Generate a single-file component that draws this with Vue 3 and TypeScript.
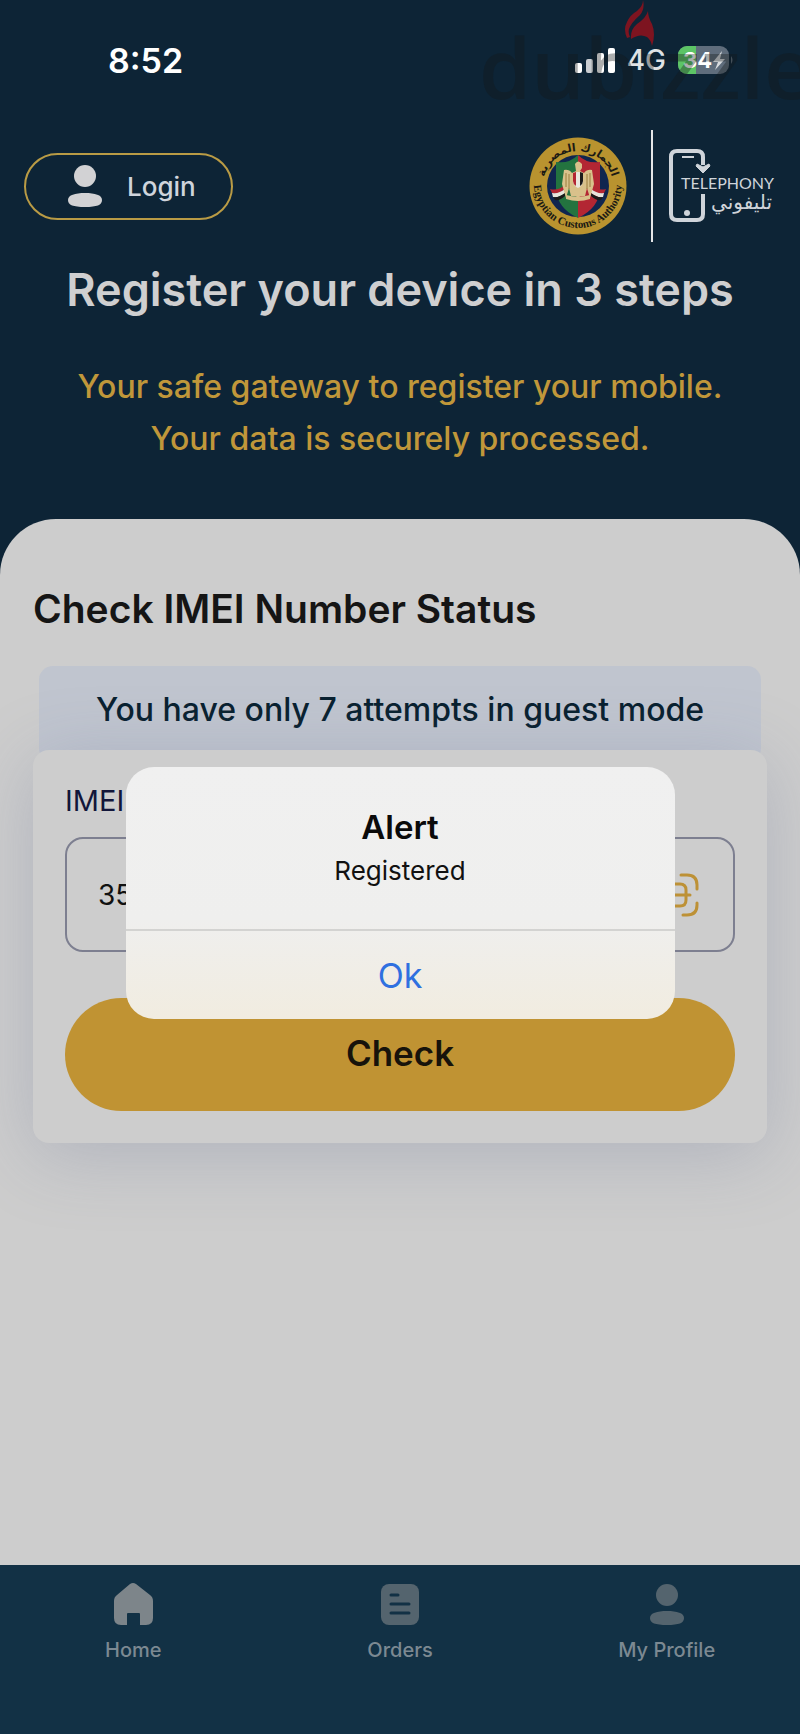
<script setup lang="ts">
import { ref } from 'vue'

interface Tab {
  id: string
  label: string
  icon: 'home' | 'orders' | 'profile'
}

const tabs: Tab[] = [
  { id: 'home', label: 'Home', icon: 'home' },
  { id: 'orders', label: 'Orders', icon: 'orders' },
  { id: 'profile', label: 'My Profile', icon: 'profile' },
]

const activeTab = ref('home')
const imei = ref('35')
const attempts = ref(7)
const alertOpen = ref(true)
</script>

<template>
  <div class="app">
    <header class="hero">
      <div class="status">
        <span class="time">8:52</span>
        <div class="indicators">
          <svg class="signal" viewBox="0 0 40 26" aria-hidden="true">
            <rect x="0" y="16" width="7" height="10" rx="2" fill="#fff" />
            <rect x="11" y="12" width="7" height="14" rx="2" fill="#c9cdd1" />
            <rect x="22" y="6" width="7" height="20" rx="2" fill="#fff" />
            <rect x="33" y="1" width="7" height="25" rx="2" fill="#fff" />
          </svg>
          <span class="network">4G</span>
          <svg class="battery" viewBox="0 0 56 28" aria-label="Battery 34 percent">
            <defs>
              <clipPath id="cell"><rect width="51" height="28" rx="9" /></clipPath>
            </defs>
            <g clip-path="url(#cell)">
              <rect width="51" height="28" fill="#5f6d7c" />
              <rect width="18" height="28" fill="#5cc466" />
            </g>
            <path d="M53 10q3 4 0 8z" fill="#5f6d7c" />
            <text x="5" y="22" class="battery-text">34</text>
            <path d="M44 5 35 16h5l-3 8 10-11h-5z" fill="#d8dcdf" />
          </svg>
        </div>
      </div>

      <div class="brand-row">
        <button class="login" type="button">
          <svg class="person" viewBox="0 0 34 42" aria-hidden="true">
            <circle cx="17" cy="11" r="11" />
            <path d="M17 28c10 0 17 2 17 7s-5 7-17 7S0 40 0 35s7-7 17-7z" />
          </svg>
          <span>Login</span>
        </button>

        <div class="logos">
          <svg class="emblem" viewBox="0 0 98 98" role="img" aria-label="Egyptian Customs Authority">
            <defs>
              <path id="arc-low" d="M5 47a44 44 0 0 0 88 0" />
              <path id="arc-high" d="M14 49a35 35 0 0 1 70 0" />
              <clipPath id="shield">
                <path d="M49 18q9 9 22 7v27q-1 19-22 29Q28 71 27 52V25q13 2 22-7z" />
              </clipPath>
            </defs>
            <circle cx="49" cy="49" r="48.500" fill="#b9932f" />
            <circle cx="49" cy="49" r="31" fill="#10264f" />
            <g clip-path="url(#shield)">
              <rect x="20" y="15" width="29" height="70" fill="#23733f" />
              <rect x="49" y="15" width="30" height="70" fill="#b32633" />
            </g>
            <path d="M21 52q8 2 15-4v4q-7 6-13 4z" fill="#b32633" />
            <path d="M23 56q7 1 13-4v4q-6 5-12 4z" fill="#e8e4dc" />
            <path d="M24 60q6 1 12-4v3q-5 5-10 4z" fill="#1c1a1a" />
            <path d="M77 52q-8 2-15-4v4q7 6 13 4z" fill="#b32633" />
            <path d="M75 56q-7 1-13-4v4q6 5 12 4z" fill="#e8e4dc" />
            <path d="M74 60q-6 1-12-4v3q5 5 10 4z" fill="#1c1a1a" />
            <path
              d="M46 27q3-5 7 0v4l-2 3 4 2q3-4 8-3l2 14-4 14-3-10-2 8h-5l-2 3-2-3h-5l-2-8-3 10-4-14 2-14q5-1 8 3l4-2z"
              fill="#d9c18b"
            />
            <path d="M44 36q5-2 10 0v9q-1 4-5 6-4-2-5-6z" fill="#e9e6de" />
            <path d="M44 36l3-1v14q-3-2-3-5z" fill="#b32633" />
            <path d="M51 35l3 1v8q0 3-3 5z" fill="#1c1a1a" />
            <path d="M40 37v15M37 36v14M58 37v15M61 36v14" stroke="#9a7d3c" fill="none" />
            <path d="m46 52-3 6m9-6 3 6" stroke="#d9c18b" stroke-width="3" />
            <path d="M37 58q12 3 24 0v4q-12 4-24 0z" fill="#d9c18b" />
            <text class="emblem-arabic">
              <textPath href="#arc-high" startOffset="50%">الجمارك المصرية</textPath>
            </text>
            <text class="emblem-latin">
              <textPath href="#arc-low" startOffset="50%">Egyptian Customs Authority</textPath>
            </text>
          </svg>
          <span class="divider"></span>
          <svg class="telephony" viewBox="0 0 108 76" role="img" aria-label="Telephony">
            <path
              d="M35 17V9q0-6-6-6H9Q3 3 3 9v57q0 6 6 6h20q6 0 6-6V46"
              fill="none"
              stroke="#cfd4da"
              stroke-width="4"
            />
            <path d="M14 9h12" stroke="#cfd4da" stroke-width="2" />
            <circle cx="19" cy="65" r="3" fill="#cfd4da" />
            <path d="m29 16 6 3 6-3 1 2-7 7-7-7z" fill="#cfd4da" stroke="#cfd4da" stroke-linejoin="round" />
            <text class="tele-latin" x="13" y="41">TELEPHONY</text>
            <text class="tele-arabic" x="104" y="61" direction="rtl">تليفوني</text>
          </svg>
        </div>
      </div>

      <h1>Register your device in 3 steps</h1>
      <p class="tagline">Your safe gateway to register your mobile.<br />Your data is securely processed.</p>

      <div class="watermark" aria-hidden="true">
        <svg class="flame" viewBox="0 0 30 48">
          <path d="M18 0q2 9-3 15-9 8-11 14-1 4 1 8l-3 1Q-2 29 2 22 5 15 12 11q6-5 6-11z" />
          <path d="M23 11q0 6 4 13 4 10 0 22-1-6-5-9-7-4-16 2-1-9 6-15 9-6 11-13z" />
        </svg>
        <span>dubızzle</span>
      </div>
    </header>

    <main class="sheet">
      <h2>Check IMEI Number Status</h2>
      <p class="notice">You have only {{ attempts }} attempts in guest mode</p>
      <form class="card" @submit.prevent="alertOpen = true">
        <label for="imei">IMEI</label>
        <div class="field">
          <input id="imei" v-model="imei" type="text" inputmode="numeric" />
          <button class="scan" type="button" aria-label="Scan IMEI">
            <svg viewBox="0 0 44 44" aria-hidden="true">
              <path
                d="M2 17v-5Q2 2 12 2h3M26 2h6q10 0 10 10v4M42 30v2q0 10-10 10h-4M15 42h-3Q2 42 2 32v-3M13 22v-5q0-6 6-6h6q6 0 6 6v10q0 6-6 6h-6q-6 0-6-6v-5M8 22h27"
              />
            </svg>
          </button>
        </div>
        <button class="check" type="submit">Check</button>
      </form>
    </main>

    <nav class="tabs">
      <a
        v-for="tab in tabs"
        :key="tab.id"
        href="#"
        :class="['tab', { active: tab.id === activeTab }]"
        @click.prevent="activeTab = tab.id"
      >
        <svg v-if="tab.icon === 'home'" viewBox="0 0 40 42" aria-hidden="true">
          <path
            d="M17 1q3-2 6 0l14 11q3 2 3 6v17q0 7-7 7h-6V31q0-1-1-1H15q-1 0-1 1v11H8q-7 0-7-7V18q0-4 3-6z"
          />
        </svg>
        <svg v-else-if="tab.icon === 'orders'" viewBox="0 0 40 42" aria-hidden="true">
          <rect x="1" y="1" width="38" height="41" rx="8" />
          <path class="lines" d="M11 12h7M11 21h18M11 30h18" />
        </svg>
        <svg v-else viewBox="0 0 40 42" aria-hidden="true">
          <circle cx="20" cy="12" r="11" />
          <path d="M20 28c10 0 17 2 17 7s-5 7-17 7-17-2-17-7 7-7 17-7z" />
        </svg>
        <span>{{ tab.label }}</span>
      </a>
    </nav>

    <div v-if="alertOpen" class="overlay">
      <div class="alert" role="alertdialog" aria-labelledby="alert-title" aria-describedby="alert-text">
        <div class="alert-body">
          <h3 id="alert-title">Alert</h3>
          <p id="alert-text">Registered</p>
        </div>
        <button type="button" @click="alertOpen = false">Ok</button>
      </div>
    </div>
  </div>
</template>

<style>
body {
  margin: 0;
  background: #0d2436;
}
</style>

<style scoped>
* {
  box-sizing: border-box;
}
.app {
  position: relative;
  display: flex;
  flex-direction: column;
  min-height: 100vh;
  background: #0d2436;
  font-family: Inter, 'Liberation Sans', sans-serif;
}
h1,
h2,
h3,
p {
  margin: 0;
}
button {
  font-family: inherit;
  cursor: pointer;
}
.hero {
  position: relative;
  padding-bottom: 54px;
  text-align: center;
}
.status {
  display: flex;
  align-items: center;
  justify-content: space-between;
  height: 120px;
  padding: 0 66px 0 108px;
  color: #fff;
}
.time {
  font-size: 34px;
  font-weight: 600;
}
.indicators {
  display: flex;
  align-items: center;
  gap: 12px;
}
.signal {
  width: 40px;
  height: 26px;
}
.network {
  font-size: 28px;
  font-weight: 500;
  color: #dfe2e5;
}
.battery {
  width: 56px;
  height: 28px;
}
.battery-text {
  font: 700 22px Inter, sans-serif;
  fill: #fff;
}
.brand-row {
  display: flex;
  align-items: center;
  justify-content: space-between;
  height: 132px;
  padding: 0 24px;
}
.login {
  display: flex;
  align-items: center;
  gap: 25px;
  height: 67px;
  padding: 0 35px 0 42px;
  border: 2px solid #b99b45;
  border-radius: 34px;
  background: transparent;
  color: #cfd4dc;
  font-size: 26px;
  font-weight: 500;
}
.person {
  width: 34px;
  height: 42px;
  fill: #d2d2d4;
}
.logos {
  display: flex;
  align-items: center;
}
.emblem {
  width: 98px;
  height: 98px;
}
.emblem-latin {
  font: 700 11px 'Liberation Serif', serif;
  fill: #1b1a14;
  text-anchor: middle;
}
.emblem-arabic {
  font: 700 11px 'DejaVu Sans', sans-serif;
  fill: #1b1a14;
  text-anchor: middle;
}
.divider {
  width: 2px;
  height: 112px;
  margin: 0 15px 0 24px;
  background: #e4e6e8;
}
.telephony {
  width: 108px;
  height: 76px;
}
.tele-latin {
  font: 400 16px Lato, sans-serif;
  fill: #cfd4da;
}
.tele-arabic {
  font: 400 20px 'DejaVu Sans', sans-serif;
  fill: #cfd4da;
}
h1 {
  margin-top: 8px;
  color: #cfcfd0;
  font-size: 45px;
  font-weight: 600;
  line-height: 60px;
}
.tagline {
  margin-top: 41px;
  color: #c0973a;
  font-size: 32px;
  font-weight: 500;
  line-height: 52px;
}
.watermark {
  position: absolute;
  top: 0;
  right: 0;
  width: 321px;
  height: 136px;
  overflow: hidden;
  color: rgba(20, 24, 24, 0.35);
  font: 600 84px/134px 'Open Sans', sans-serif;
  text-align: left;
  white-space: nowrap;
}
.flame {
  position: absolute;
  top: 0;
  left: 146px;
  width: 30px;
  height: 48px;
  fill: #7d1420;
}
.sheet {
  flex: 1;
  padding: 64px 33px;
  border-radius: 56px 56px 0 0;
  background: #cdcdcd;
}
h2 {
  color: #151515;
  font-size: 39px;
  font-weight: 600;
  line-height: 52px;
}
.notice {
  height: 96px;
  margin: 31px 6px 0;
  border-radius: 14px;
  background: #c0c5cf;
  color: #08202f;
  font-size: 32px;
  font-weight: 500;
  line-height: 88px;
  text-align: center;
}
.card {
  position: relative;
  margin-top: -12px;
  padding: 32px;
  border-radius: 16px;
  background: #cdcdcd;
  box-shadow: 0 12px 72px rgba(115, 125, 155, 0.32);
}
.card label {
  display: block;
  color: #12163a;
  font-size: 29px;
  line-height: 38px;
}
.field {
  display: flex;
  align-items: center;
  height: 115px;
  margin: 17px 0 46px;
  padding: 0 34px 0 31px;
  border: 2px solid #7d7f90;
  border-radius: 18px;
}
.field input {
  flex: 1;
  min-width: 0;
  padding: 0;
  border: 0;
  outline: 0;
  background: transparent;
  color: #111;
  font: 400 28px Inter, sans-serif;
}
.scan {
  padding: 0;
  border: 0;
  background: transparent;
}
.scan svg {
  display: block;
  width: 44px;
  height: 44px;
  fill: none;
  stroke: #bd9136;
  stroke-width: 3;
  stroke-linecap: round;
}
.check {
  display: block;
  width: 100%;
  height: 113px;
  padding: 0 0 4px;
  border: 0;
  border-radius: 57px;
  background: #c09333;
  color: #17130b;
  font-size: 35px;
  font-weight: 600;
}
.tabs {
  display: flex;
  height: 169px;
  background: #123145;
}
.tab {
  flex: 1;
  display: flex;
  flex-direction: column;
  align-items: center;
  gap: 13px;
  padding-top: 18px;
  color: #7c8992;
  font-size: 20px;
  font-weight: 500;
  line-height: 24px;
  text-decoration: none;
}
.tab svg {
  width: 40px;
  height: 42px;
  fill: #54646e;
}
.tab.active svg {
  fill: #7d858a;
}
.lines {
  fill: none;
  stroke: #123145;
  stroke-width: 3;
  stroke-linecap: round;
}
.overlay {
  position: absolute;
  inset: 0;
  display: flex;
  align-items: center;
  justify-content: center;
  padding: 52px 24px 0;
}
.alert {
  width: 100%;
  max-width: 549px;
  overflow: hidden;
  border-radius: 28px;
  background: linear-gradient(#f0f0f0 0%, #efefee 60%, #f1ece0 100%);
  text-align: center;
}
.alert-body {
  padding: 38px 32px 36px;
}
h3 {
  color: #0a0a0a;
  font-size: 33px;
  font-weight: 600;
  line-height: 44px;
}
.alert p {
  color: #111;
  font-size: 26px;
  line-height: 44px;
}
.alert button {
  display: block;
  width: 100%;
  height: 90px;
  border: 0;
  border-top: 2px solid #d3d3d1;
  background: transparent;
  color: #2f70e0;
  font-size: 34px;
}
</style>
